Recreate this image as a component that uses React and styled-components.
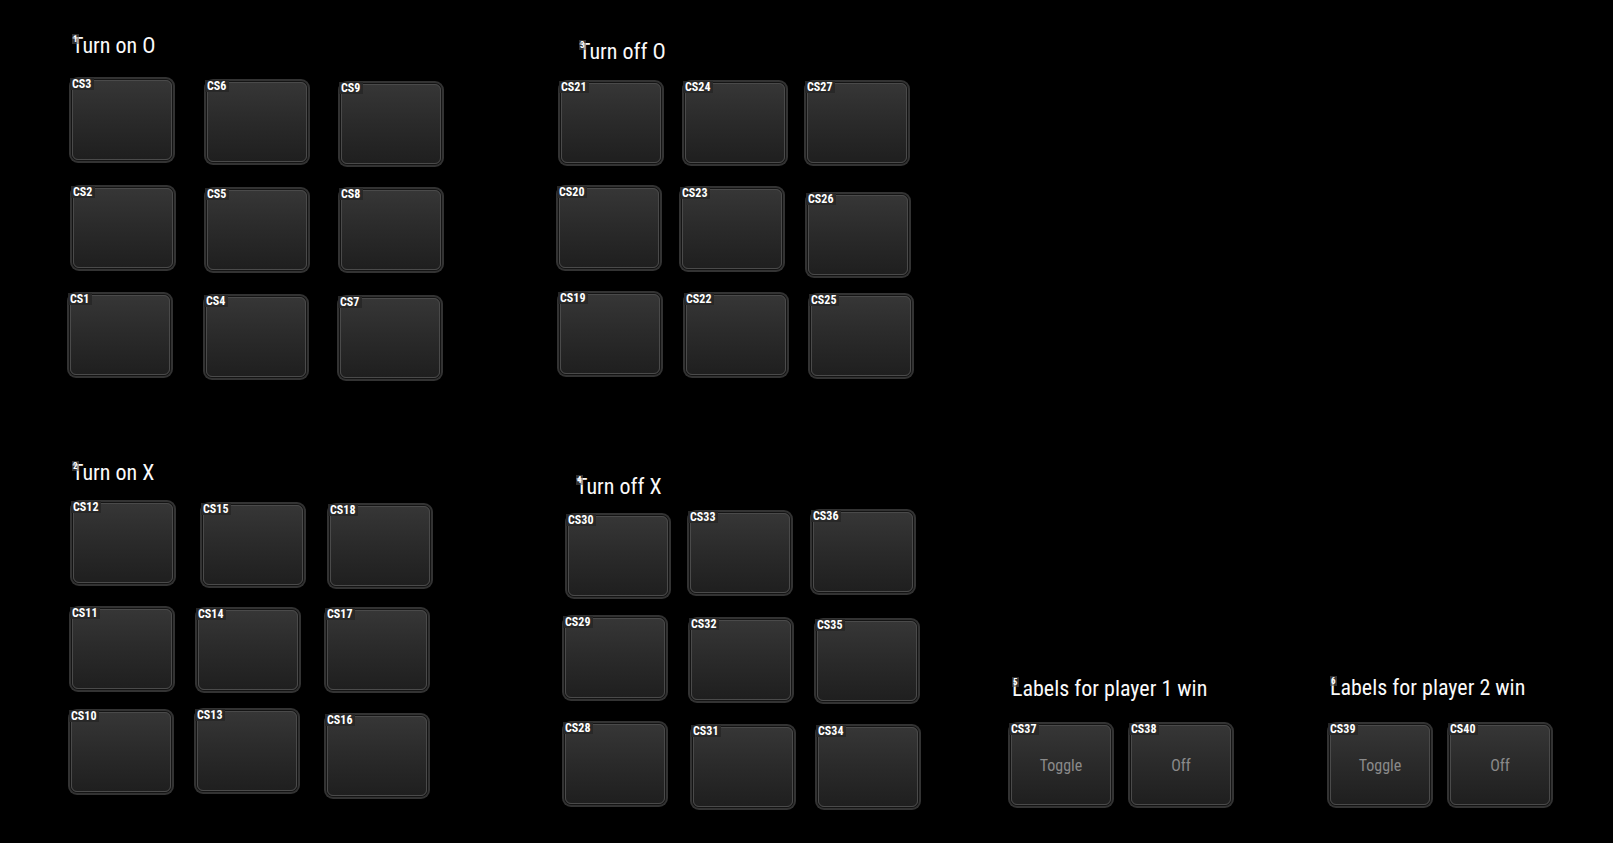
import React from "react";
import styled, { createGlobalStyle } from "styled-components";

const Global = createGlobalStyle`
  html, body { margin: 0; padding: 0; background: #000; }
  body { font-family: "Roboto Condensed", "Liberation Sans Narrow", "DejaVu Sans Condensed", Roboto, sans-serif; }
`;

const condensed = `"Roboto Condensed", "Liberation Sans Narrow", "DejaVu Sans Condensed", Roboto, sans-serif`;

const Canvas = styled.div`
  position: relative;
  width: 1613px;
  height: 843px;
  background: #000;
  overflow: hidden;
`;

const Panel = styled.section`
  position: absolute;
  left: ${(p) => p.$x}px;
  top: ${(p) => p.$y}px;
  display: flex;
  flex-direction: column;
  align-items: flex-start;
`;

const Title = styled.h2`
  position: relative;
  margin: 0 0 ${(p) => p.$gap}px ${(p) => p.$indent}px;
  font-family: ${condensed};
  font-stretch: condensed;
  font-weight: 400;
  font-size: 22px;
  line-height: 28px;
  color: #fafafa;
  white-space: nowrap;
`;

const Index = styled.span`
  position: absolute;
  left: 0;
  top: 2px;
  padding: 0 1px;
  font-family: ${condensed};
  font-size: 9px;
  line-height: 10px;
  font-weight: 700;
  color: #fff;
  background: rgba(90, 90, 90, 0.55);
`;

const Grid = styled.div`
  display: grid;
  grid-template-columns: repeat(${(p) => p.$cols}, 106px);
  grid-auto-rows: 86px;
  column-gap: ${(p) => p.$colGap}px;
  row-gap: ${(p) => p.$rowGap}px;
`;

const Button = styled.div`
  position: relative;
  box-sizing: border-box;
  width: 106px;
  height: 86px;
  padding: 3px;
  border-radius: 9px;
  background: #333333;
  transform: translate(${(p) => p.$dx || 0}px, ${(p) => p.$dy || 0}px);
`;

const Face = styled.div`
  box-sizing: border-box;
  width: 100%;
  height: 100%;
  border-radius: 6px;
  border: 1px solid #4a4a4a;
  box-shadow: 0 0 0 1px #141414;
  background: linear-gradient(180deg, #363636 0%, #2b2b2b 45%, #1f1f1f 100%);
  display: flex;
  align-items: center;
  justify-content: center;
  font-family: ${condensed};
  font-size: 16px;
  color: #8a8a8a;
`;

const Tag = styled.span`
  position: absolute;
  left: 1px;
  top: 1px;
  padding: 0 3px 0 2px;
  font-family: ${condensed};
  font-stretch: condensed;
  font-weight: 700;
  font-size: 12px;
  line-height: 12px;
  color: #fff;
  background: rgba(40, 40, 40, 0.95);
`;

const panels = [
  {
    n: 1, title: "Turn on O", x: 69, y: 32, indent: 3, gap: 17, cols: 3, colGap: 28, rowGap: 22,
    buttons: [
      ["CS3", 0, 0], ["CS6", 1, 2], ["CS9", 1, 4],
      ["CS2", 1, 0], ["CS5", 1, 2], ["CS8", 1, 2],
      ["CS1", -2, -1], ["CS4", 0, 1], ["CS7", 0, 2],
    ],
  },
  {
    n: 3, title: "Turn off O", x: 557, y: 38, indent: 22, gap: 14, cols: 3, colGap: 18, rowGap: 20,
    buttons: [
      ["CS21", 1, 0], ["CS24", 1, 0], ["CS27", -1, 0],
      ["CS20", -1, -1], ["CS23", -2, 0], ["CS26", 0, 6],
      ["CS19", 0, -1], ["CS22", 2, 0], ["CS25", 3, 1],
    ],
  },
  {
    n: 2, title: "Turn on X", x: 69, y: 459, indent: 3, gap: 15, cols: 3, colGap: 22, rowGap: 18,
    buttons: [
      ["CS12", 1, -2], ["CS15", 3, 0], ["CS18", 2, 1],
      ["CS11", 0, 0], ["CS14", -2, 1], ["CS17", -1, 1],
      ["CS10", -1, -1], ["CS13", -3, -2], ["CS16", -1, 3],
    ],
  },
  {
    n: 4, title: "Turn off X", x: 563, y: 473, indent: 13, gap: 10, cols: 3, colGap: 19, rowGap: 20,
    buttons: [
      ["CS30", 2, 2], ["CS33", -1, -1], ["CS36", -3, -2],
      ["CS29", -1, -2], ["CS32", 0, 0], ["CS35", 1, 1],
      ["CS28", -1, -2], ["CS31", 2, 1], ["CS34", 2, 1],
    ],
  },
  {
    n: 5, title: "Labels for player 1 win", x: 1008, y: 675, indent: 4, gap: 19, cols: 2, colGap: 14, rowGap: 0,
    buttons: [["CS37", 0, 0, "Toggle"], ["CS38", 0, 0, "Off"]],
  },
  {
    n: 6, title: "Labels for player 2 win", x: 1327, y: 674, indent: 3, gap: 20, cols: 2, colGap: 14, rowGap: 0,
    buttons: [["CS39", 0, 0, "Toggle"], ["CS40", 0, 0, "Off"]],
  },
];

export default function App() {
  return (
    <>
      <Global />
      <Canvas>
        {panels.map((p) => (
          <Panel key={p.title} $x={p.x} $y={p.y}>
            <Title $indent={p.indent} $gap={p.gap}>
              <Index>{p.n}</Index>
              {p.title}
            </Title>
            <Grid $cols={p.cols} $colGap={p.colGap} $rowGap={p.rowGap}>
              {p.buttons.map(([id, dx, dy, label]) => (
                <Button key={id} $dx={dx} $dy={dy}>
                  <Face>{label}</Face>
                  <Tag>{id}</Tag>
                </Button>
              ))}
            </Grid>
          </Panel>
        ))}
      </Canvas>
    </>
  );
}
